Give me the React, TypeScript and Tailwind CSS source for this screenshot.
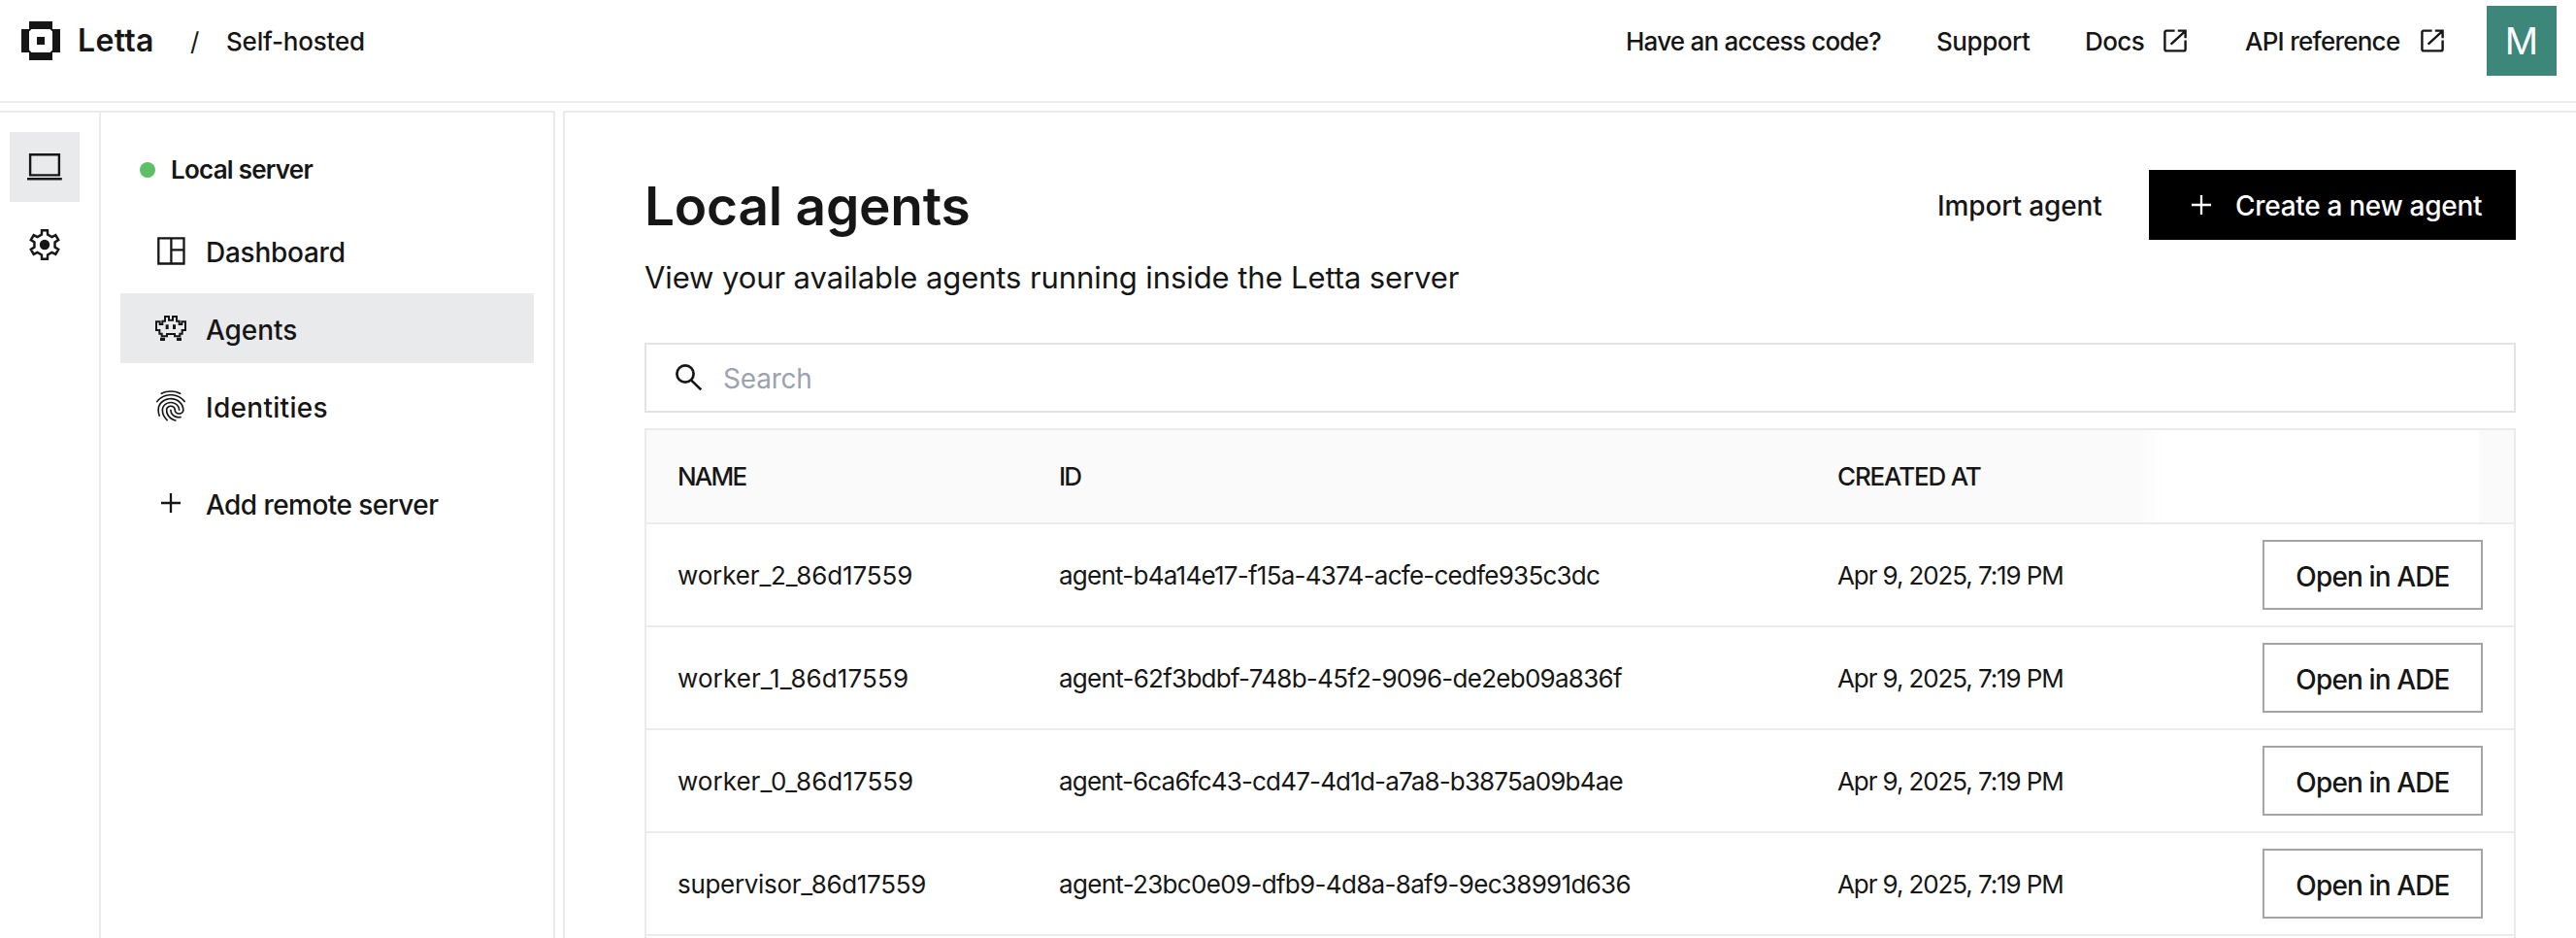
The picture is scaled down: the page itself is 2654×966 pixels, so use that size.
import type { ReactNode } from "react";
import { MdFingerprint } from "react-icons/md";

function LettaMark() {
  return (
    <svg width="40" height="40" viewBox="0 0 40 40" fill="#161616" className="shrink-0">
      <path d="M8 0h24v8H8zM8 32h24v8H8zM0 8h8v24H0zM32 8h8v24h-8zM16 16h8v8h-8z" />
      <path d="M8 8h2.5L8 10.5zM32 8v2.5L29.5 8zM8 32v-2.5l2.5 2.5zM32 32h-2.5l2.5-2.5z" />
    </svg>
  );
}

function LaptopIcon() {
  return (
    <svg width="36" height="28" viewBox="0 0 36 28" fill="none" stroke="#161616" strokeWidth="2.4">
      <path d="M3.1 1.2h29.8v21.2H3.1z" />
      <path d="M0 26.2h35.8" />
    </svg>
  );
}

const gearPoints = [0, 60, 120, 180, 240, 300]
  .flatMap((deg) => {
    const a = (deg * Math.PI) / 180;
    return [
      [-3.1, -10.4],
      [-2.9, -14.7],
      [2.9, -14.7],
      [3.1, -10.4],
    ].map(([x, y]) => {
      const px = 16 + x * Math.cos(a) - y * Math.sin(a);
      const py = 16 + x * Math.sin(a) + y * Math.cos(a);
      return `${px.toFixed(2)},${py.toFixed(2)}`;
    });
  })
  .join(" ");

function GearIcon() {
  return (
    <svg width="32" height="32" viewBox="0 0 32 32" fill="none" stroke="#161616" strokeWidth="2.5">
      <polygon points={gearPoints} />
      <circle cx="16" cy="16" r="5.2" fill="#161616" stroke="none" />
    </svg>
  );
}

function DashboardIcon() {
  return (
    <svg width="29" height="29" viewBox="0 0 29 29" fill="none" stroke="#161616" strokeWidth="2.3">
      <path d="M1.3 1.3h26.2v26.2H1.3zM14.4 1.3v26.2M14.4 13.3h13.1" />
    </svg>
  );
}

function InvaderIcon() {
  return (
    <svg width="32" height="26.7" viewBox="120 314 96 80" fill="none" stroke="#161616" strokeWidth="6">
      <path d="M162 317H150V331H142V341H134V333H123V359H133V370H140V378H156V371H180V378H196V370H203V359H213V333H202V341H194V331H186V317H174V328H162Z" />
      <path d="M135 382h15v12h-15zM186 382h15v12h-15zM152 342h9v14h-9zM174 342h9v14h-9z" fill="#161616" stroke="none" />
    </svg>
  );
}

function PlusIcon() {
  return (
    <svg width="20" height="20" viewBox="0 0 20 20" fill="none" stroke="currentColor" strokeWidth="2.3" className="shrink-0">
      <path d="M10 0v20M0 10h20" />
    </svg>
  );
}

function ExternalIcon() {
  return (
    <svg width="25" height="24" viewBox="0 0 25 24" fill="none" stroke="#161616" strokeWidth="2.4" className="shrink-0">
      <path d="M11.6 1.6H3A1.6 1.6 0 0 0 1.4 3.2v17.6A1.6 1.6 0 0 0 3 22.4h18a1.6 1.6 0 0 0 1.6-1.6V11.6" />
      <path d="M14.8 1.6h7.8v7.6M22.3 2.1L7.6 15.6" />
    </svg>
  );
}

function SearchIcon() {
  return (
    <svg width="28" height="28" viewBox="0 0 28 28" fill="none" stroke="#161616" strokeWidth="2.7" className="shrink-0">
      <circle cx="10" cy="10" r="8.6" />
      <path d="M16.2 16.6L26.3 26.4" />
    </svg>
  );
}

const menu: { label: string; text: string; icon: ReactNode; active?: boolean }[] = [
  { label: "Dashboard", text: "pl-[1px] tracking-[-0.26px]", icon: <DashboardIcon /> },
  { label: "Agents", text: "pl-[1px] tracking-[-0.07px]", icon: <InvaderIcon />, active: true },
  {
    label: "Identities",
    text: "pl-[1px] tracking-[0.3px]",
    icon: <MdFingerprint className="h-[38px] w-10 text-[#161616]" preserveAspectRatio="none" />,
  },
];

const agents = [
  { name: "worker_2_86d17559", nameTracking: "tracking-[-0.14px]", id: "agent-b4a14e17-f15a-4374-acfe-cedfe935c3dc", idTracking: "tracking-[-0.75px]" },
  { name: "worker_1_86d17559", nameTracking: "tracking-[0.1px]", id: "agent-62f3bdbf-748b-45f2-9096-de2eb09a836f", idTracking: "tracking-[-0.73px]" },
  { name: "worker_0_86d17559", nameTracking: "tracking-[0.03px]", id: "agent-6ca6fc43-cd47-4d1d-a7a8-b3875a09b4ae", idTracking: "tracking-[-0.83px]" },
  { name: "supervisor_86d17559", nameTracking: "tracking-[-0.31px]", id: "agent-23bc0e09-dfb9-4d8a-8af9-9ec38991d636", idTracking: "tracking-[-0.68px]" },
];

function Header() {
  return (
    <header className="h-[106px] shrink-0 border-b-2 border-[#ebebeb]">
      <div className="flex h-[84px] items-center pr-5 pl-[22px] text-[26px] font-medium">
        <LettaMark />
        <span className="ml-[18px] w-[116px] text-[32px] font-semibold tracking-[0.31px]">Letta</span>
        <span className="w-[37px] font-normal">/</span>
        <span className="tracking-[-0.21px]">Self-hosted</span>
        <nav className="ml-auto flex items-center">
          <a className="w-[263px] tracking-[-0.77px]">Have an access code?</a>
          <a className="ml-[57px] w-24 tracking-[-0.45px]">Support</a>
          <a className="ml-[57px] flex items-center">
            <span className="w-[81px] tracking-[-0.59px]">Docs</span>
            <ExternalIcon />
          </a>
          <a className="ml-[59px] flex items-center">
            <span className="w-[181px] tracking-[-0.75px]">API reference</span>
            <ExternalIcon />
          </a>
          <div className="ml-[43px] flex size-[72px] items-center justify-center bg-[#3c877a] text-[38px] font-normal text-white">
            M
          </div>
        </nav>
      </div>
    </header>
  );
}

function Sidebar() {
  return (
    <aside className="flex w-[572px] shrink-0 border-t-2 border-r-2 border-[#ebebeb]">
      <div className="flex w-[104px] flex-col gap-2 border-r-2 border-[#ebebeb] pt-5 pl-[10px]">
        <div className="flex size-[72px] items-center justify-center bg-[#e9eaec]">
          <LaptopIcon />
        </div>
        <div className="flex size-[72px] items-center justify-center">
          <GearIcon />
        </div>
      </div>
      <div className="flex flex-1 flex-col gap-2 px-5 pt-[22px]">
        <div className="mb-1 flex h-[72px] items-center gap-4 pt-[1px] pl-5 text-[26px] font-semibold tracking-[-0.76px]">
          <span className="size-4 rounded-full bg-[#5dc066]" />
          Local server
        </div>
        {menu.map((m) => (
          <div
            key={m.label}
            className={`flex h-[72px] items-center gap-[15px] pl-8 text-[28px] font-medium ${m.active ? "bg-[#e9eaec]" : ""}`}
          >
            <span className="flex w-10 justify-center">{m.icon}</span>
            <span className={`pt-[3px] ${m.text}`}>{m.label}</span>
          </div>
        ))}
        <div className="mt-5 flex h-[72px] items-center gap-[15px] pl-8 text-[28px] font-medium">
          <span className="flex w-10 justify-center">
            <PlusIcon />
          </span>
          <span className="pt-[3px] pl-[1px] tracking-[-0.56px]">Add remote server</span>
        </div>
      </div>
    </aside>
  );
}

function AgentsTable() {
  const columns = "grid grid-cols-[392px_803px_339px_1fr] items-center border-b-2 border-[#ebebeb]";
  return (
    <div className="mt-4 flex flex-1 flex-col border-x-2 border-t-2 border-[#ebebeb] text-[26px]">
      <div className={`${columns} h-[97px] shrink-0 bg-[#fafafa] font-medium`}>
        <div className="pb-[1px] pl-8 tracking-[-1.8px]">NAME</div>
        <div className="pb-[1px] pl-[33px] tracking-[-1.8px]">ID</div>
        <div className="pb-[1px] pl-8 tracking-[-1.16px]">CREATED AT</div>
        <div className="h-full w-[354px] bg-linear-to-r from-white/0 to-white to-[30px]" />
      </div>
      {agents.map((a) => (
        <div key={a.name} className={`${columns} h-[106px] shrink-0`}>
          <div className={`pl-8 ${a.nameTracking}`}>{a.name}</div>
          <div className={`pl-[33px] ${a.idTracking}`}>{a.id}</div>
          <div className="pl-8 whitespace-nowrap tracking-[-1.1px]">Apr 9, 2025, 7:19 PM</div>
          <div className="flex justify-end pr-8">
            <button className="flex h-[72px] w-[227px] items-center justify-center border-2 border-[#a5a5a5] pt-[3px] text-[28px] font-medium tracking-[-0.87px]">
              Open in ADE
            </button>
          </div>
        </div>
      ))}
    </div>
  );
}

export default function App() {
  return (
    <div className="flex h-[966px] w-full flex-col overflow-hidden bg-white font-[Inter,sans-serif] whitespace-nowrap text-[#161616]">
      <Header />
      <div className="flex min-h-0 flex-1 gap-2 pt-2">
        <Sidebar />
        <main className="flex min-w-0 flex-1 flex-col border-t-2 border-l-2 border-[#ebebeb] pt-[59px] pr-[62px] pl-[82px]">
          <div className="flex h-[72px] shrink-0 items-center">
            <h1 className="pt-[2px] text-[55px] leading-[64px] font-semibold tracking-[-0.24px]">Local agents</h1>
            <button className="ml-auto w-[218px] pt-[2px] text-left text-[28px] font-medium tracking-[-0.12px]">
              Import agent
            </button>
            <button className="flex h-[72px] w-[378px] items-center gap-[25px] bg-black pl-11 text-[28px] font-medium tracking-[-0.3px] text-white">
              <PlusIcon />
              <span className="pt-[2px]">Create a new agent</span>
            </button>
          </div>
          <p className="mt-[19px] shrink-0 text-[31px] leading-[40px] tracking-[-0.1px]">
            View your available agents running inside the Letta server
          </p>
          <div className="mt-[47px] flex h-[72px] shrink-0 items-center border-2 border-[#e3e3e3] pl-[30px]">
            <SearchIcon />
            <span className="pt-[2px] pl-[21px] text-[28px] tracking-[-0.21px] text-[#9ca3af]">Search</span>
          </div>
          <AgentsTable />
        </main>
      </div>
    </div>
  );
}
